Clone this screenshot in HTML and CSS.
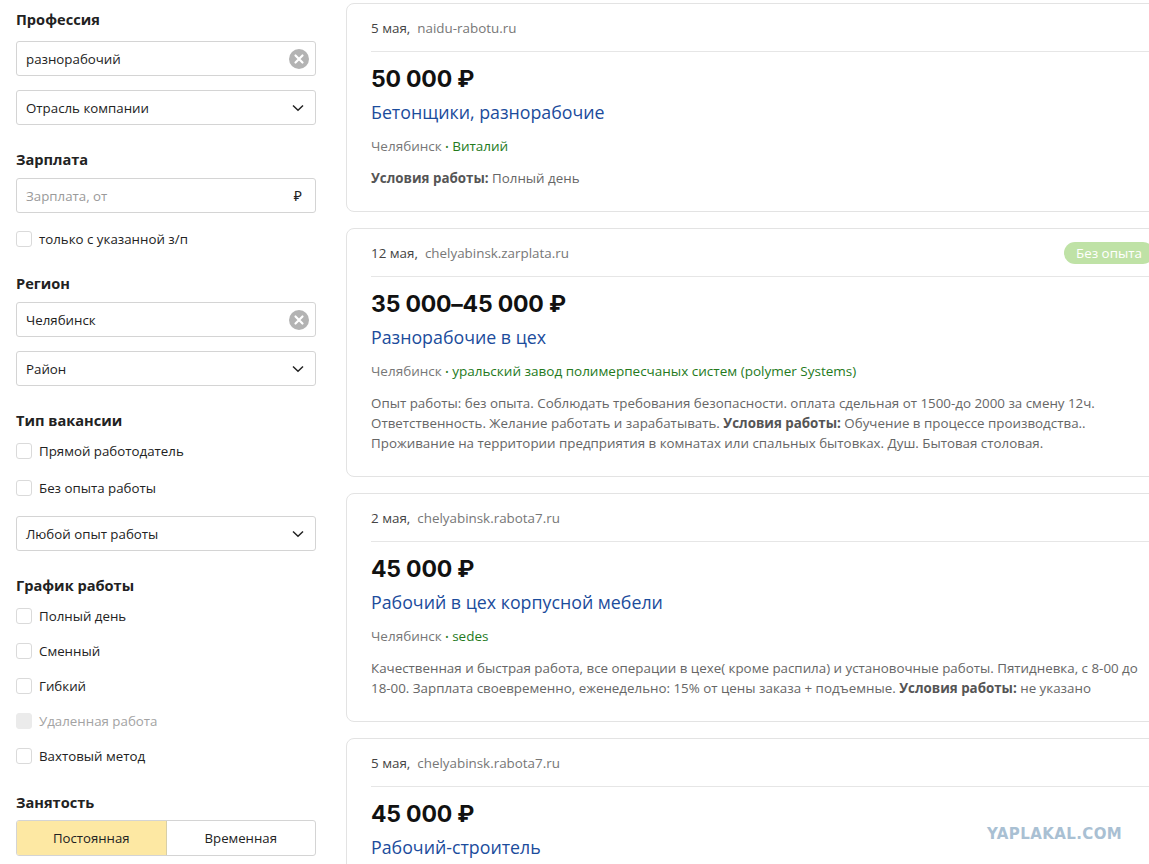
FILE: index.html
```html
<!DOCTYPE html>
<html lang="ru">
<head>
<meta charset="utf-8">
<title>Вакансии</title>
<link rel="stylesheet" href="styles.css">
</head>
<body>
<div class="page">
  <aside class="sidebar">
    <h3 class="heading first">Профессия</h3>
    <div class="field">
      <span class="value">разнорабочий</span>
      <span class="clear"><svg width="20" height="20" viewBox="0 0 20 20"><circle cx="10" cy="10" r="10" fill="#b3b3b3"/><path d="M6.5 6.5 L13.5 13.5 M13.5 6.5 L6.5 13.5" stroke="#fff" stroke-width="2.2" stroke-linecap="round"/></svg></span>
    </div>
    <div class="field select gap">
      <span class="value">Отрасль компании</span>
      <svg class="chev" width="12" height="8" viewBox="0 0 12 8"><path d="M1 1.5 L6 6.2 L11 1.5" fill="none" stroke="#222" stroke-width="1.5"/></svg>
    </div>

    <h3 class="heading">Зарплата</h3>
    <div class="field">
      <span class="value placeholder">Зарплата, от</span>
      <span class="rub">₽</span>
    </div>
    <label class="check single"><span class="box"></span>только с указанной з/п</label>

    <h3 class="heading">Регион</h3>
    <div class="field">
      <span class="value">Челябинск</span>
      <span class="clear"><svg width="20" height="20" viewBox="0 0 20 20"><circle cx="10" cy="10" r="10" fill="#b3b3b3"/><path d="M6.5 6.5 L13.5 13.5 M13.5 6.5 L6.5 13.5" stroke="#fff" stroke-width="2.2" stroke-linecap="round"/></svg></span>
    </div>
    <div class="field select gap">
      <span class="value">Район</span>
      <svg class="chev" width="12" height="8" viewBox="0 0 12 8"><path d="M1 1.5 L6 6.2 L11 1.5" fill="none" stroke="#222" stroke-width="1.5"/></svg>
    </div>

    <h3 class="heading">Тип вакансии</h3>
    <div class="checks wide">
      <label class="check"><span class="box"></span>Прямой работодатель</label>
      <label class="check"><span class="box"></span>Без опыта работы</label>
    </div>
    <div class="field select gap2">
      <span class="value">Любой опыт работы</span>
      <svg class="chev" width="12" height="8" viewBox="0 0 12 8"><path d="M1 1.5 L6 6.2 L11 1.5" fill="none" stroke="#222" stroke-width="1.5"/></svg>
    </div>

    <h3 class="heading">График работы</h3>
    <div class="checks">
      <label class="check"><span class="box"></span>Полный день</label>
      <label class="check"><span class="box"></span>Сменный</label>
      <label class="check"><span class="box"></span>Гибкий</label>
      <label class="check disabled"><span class="box"></span>Удаленная работа</label>
      <label class="check"><span class="box"></span>Вахтовый метод</label>
    </div>

    <h3 class="heading last">Занятость</h3>
    <div class="segmented">
      <span class="seg active">Постоянная</span>
      <span class="seg">Временная</span>
    </div>
  </aside>

  <main class="results">
    <article class="card">
      <div class="card-head"><span class="date">5 мая,</span><span class="site">naidu-rabotu.ru</span></div>
      <div class="price">50 000 ₽</div>
      <a class="title">Бетонщики, разнорабочие</a>
      <div class="meta">Челябинск <span class="dot">•</span> <span class="org">Виталий</span></div>
      <p class="desc"><b>Условия работы:</b> Полный день</p>
    </article>

    <article class="card">
      <div class="card-head"><span class="date">12 мая,</span><span class="site">chelyabinsk.zarplata.ru</span><span class="badge">Без опыта</span></div>
      <div class="price">35 000–45 000 ₽</div>
      <a class="title">Разнорабочие в цех</a>
      <div class="meta">Челябинск <span class="dot">•</span> <span class="org">уральский завод полимерпесчаных систем (polymer Systems)</span></div>
      <p class="desc">Опыт работы: без опыта. Соблюдать требования безопасности. оплата сдельная от 1500-до 2000 за смену 12ч. Ответственность. Желание работать и зарабатывать. <b>Условия работы:</b> Обучение в процессе производства.. Проживание на территории предприятия в комнатах или спальных бытовках. Душ. Бытовая столовая.</p>
    </article>

    <article class="card">
      <div class="card-head"><span class="date">2 мая,</span><span class="site">chelyabinsk.rabota7.ru</span></div>
      <div class="price">45 000 ₽</div>
      <a class="title">Рабочий в цех корпусной мебели</a>
      <div class="meta">Челябинск <span class="dot">•</span> <span class="org">sedes</span></div>
      <p class="desc">Качественная и быстрая работа, все операции в цехе( кроме распила) и установочные работы. Пятидневка, с 8-00 до 18-00. Зарплата своевременно, еженедельно: 15% от цены заказа + подъемные. <b>Условия работы:</b> не указано</p>
    </article>

    <article class="card">
      <div class="card-head"><span class="date">5 мая,</span><span class="site">chelyabinsk.rabota7.ru</span></div>
      <div class="price">45 000 ₽</div>
      <a class="title">Рабочий-строитель</a>
    </article>
  </main>
</div>
<div class="watermark">YAPLAKAL.COM</div>
</body>
</html>
```

FILE: styles.css
```css
html, body {
  margin: 0;
  padding: 0;
  background: #fff;
  overflow: hidden;
  height: 864px;
}
body {
  font-family: "Open Sans", "Noto Sans", sans-serif;
  color: #222;
  font-size: 13.3px;
  position: relative;
}
.page {
  display: flex;
  gap: 30px;
  padding-left: 16px;
  width: 1300px;
}
.sidebar {
  width: 300px;
  flex: none;
  padding-top: 8px;
}
.heading {
  margin: 23px 0 8px;
  font-size: 14.6px;
  font-weight: 700;
  line-height: 22px;
  color: #222;
}
.heading.first { margin-top: 0; margin-bottom: 11px; }
.heading.last { margin-top: 25px; margin-bottom: 7px; }
.field {
  height: 35px;
  box-sizing: border-box;
  border: 1px solid #d4d4d4;
  border-radius: 3px;
  display: flex;
  align-items: center;
  padding: 0 6px 0 9px;
  font-size: 13.3px;
}
.field.gap { margin-top: 14px; }
.field.gap2 { margin-top: 18px; }
.field .value { flex: 1; }
.placeholder { color: #9a9a9a; }
.clear { display: flex; }
.chev { margin-right: 5px; }
.rub { margin-right: 7px; font-size: 14px; color: #222; }
.check {
  display: flex;
  align-items: center;
  gap: 7px;
  height: 20px;
  font-size: 13.3px;
  color: #222;
}
.check.single { margin-top: 16px; }
.box {
  width: 16px;
  height: 16px;
  box-sizing: border-box;
  border: 1px solid #dadada;
  border-radius: 3px;
  background: #fff;
}
.check.disabled { color: #a3a3a3; }
.check.disabled .box { background: #ebebeb; border-color: #ebebeb; }
.checks {
  display: flex;
  flex-direction: column;
  gap: 15px;
  margin-top: 10px;
}
.checks.wide { gap: 17px; }
.segmented {
  display: flex;
  height: 36px;
  box-sizing: border-box;
  border: 1px solid #d4d4d4;
  border-radius: 3px;
  overflow: hidden;
}
.seg {
  flex: 1;
  display: flex;
  align-items: center;
  justify-content: center;
  font-size: 13.2px;
  color: #222;
}
.seg.active {
  background: #fde8a3;
  border-right: 1px solid #d8cfa8;
}
.results {
  width: 830px;
  flex: none;
  display: flex;
  flex-direction: column;
  gap: 16px;
  padding-top: 3px;
}
.card {
  border: 1px solid #e3e3e3;
  border-radius: 8px;
  padding: 0 24px 23px;
}
.card-head {
  display: flex;
  align-items: center;
  height: 48px;
  padding-top: 1px;
  box-sizing: border-box;
  border-bottom: 1px solid #e6e6e6;
  font-size: 13.4px;
}
.date { color: #444; margin-right: 7px; }
.site { color: #777; }
.badge {
  margin-left: auto;
  background: #bfe2a6;
  color: #fff;
  border-radius: 11px;
  height: 22px;
  line-height: 22px;
  padding: 0 12px;
  font-size: 13.4px;
  margin-right: -3px;
}
.price {
  margin-top: 12px;
  font-family: "Inter", "Noto Sans", sans-serif;
  font-weight: 700;
  font-size: 23px;
  line-height: 30px;
  color: #111;
  letter-spacing: -0.2px;
}
.title {
  display: block;
  margin-top: 5px;
  font-size: 17.8px;
  line-height: 26px;
  color: #1b4c9c;
}
.meta {
  margin-top: 12px;
  font-size: 13.5px;
  line-height: 18px;
  color: #777;
}
.dot { color: #2b7a1d; font-size: 9px; vertical-align: 1px; }
.org { color: #247a1c; }
.desc {
  margin: 12px 0 0;
  font-size: 13.35px;
  line-height: 20px;
  color: #666;
}
.desc b { color: #555; font-weight: 700; }
.watermark {
  position: absolute;
  left: 987px;
  top: 825px;
  font-family: "DejaVu Sans", sans-serif;
  font-weight: 700;
  font-size: 15px;
  color: #a9c0d3;
  letter-spacing: 0.4px;
}
```
